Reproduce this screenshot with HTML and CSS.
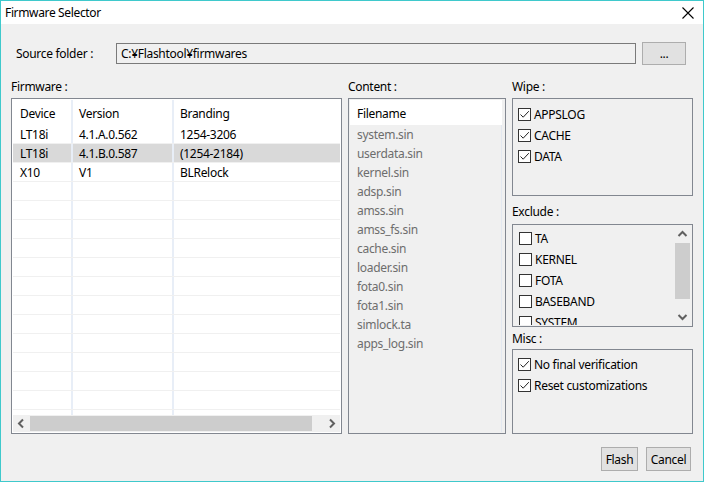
FILE: index.html
```html
<!DOCTYPE html>
<html>
<head>
<meta charset="utf-8">
<link rel="stylesheet" href="styles.css">
</head>
<body>
<div class="window">
  <div class="titlebar">
    <span class="title">Firmware Selector</span>
    <svg class="close" width="12" height="12" viewBox="0 0 12 12"><path d="M0.5 0.5 L11.5 11.5 M11.5 0.5 L0.5 11.5" stroke="#000" stroke-width="1.1" fill="none"/></svg>
  </div>
  <div class="body">
    <div class="source-row">
      <span class="source-label">Source folder :</span>
      <div class="textfield">C:¥Flashtool¥firmwares</div>
      <div class="btn btn-browse">...</div>
    </div>
    <div class="columns">
      <div class="col col-fw">
        <div class="grp-label">Firmware :</div>
        <div class="box fw-box">
          <div class="table">
            <div class="trow thead"><div class="c c1">Device</div><div class="c c2">Version</div><div class="c c3">Branding</div></div>
            <div class="trow"><div class="c c1">LT18i</div><div class="c c2">4.1.A.0.562</div><div class="c c3">1254-3206</div></div>
            <div class="trow sel"><div class="c c1">LT18i</div><div class="c c2">4.1.B.0.587</div><div class="c c3">(1254-2184)</div></div>
            <div class="trow"><div class="c c1">X10</div><div class="c c2">V1</div><div class="c c3">BLRelock</div></div>
            <div class="trow"><div class="c c1"></div><div class="c c2"></div><div class="c c3"></div></div>
            <div class="trow"><div class="c c1"></div><div class="c c2"></div><div class="c c3"></div></div>
            <div class="trow"><div class="c c1"></div><div class="c c2"></div><div class="c c3"></div></div>
            <div class="trow"><div class="c c1"></div><div class="c c2"></div><div class="c c3"></div></div>
            <div class="trow"><div class="c c1"></div><div class="c c2"></div><div class="c c3"></div></div>
            <div class="trow"><div class="c c1"></div><div class="c c2"></div><div class="c c3"></div></div>
            <div class="trow"><div class="c c1"></div><div class="c c2"></div><div class="c c3"></div></div>
            <div class="trow"><div class="c c1"></div><div class="c c2"></div><div class="c c3"></div></div>
            <div class="trow"><div class="c c1"></div><div class="c c2"></div><div class="c c3"></div></div>
            <div class="trow"><div class="c c1"></div><div class="c c2"></div><div class="c c3"></div></div>
            <div class="trow"><div class="c c1"></div><div class="c c2"></div><div class="c c3"></div></div>
            <div class="trow"><div class="c c1"></div><div class="c c2"></div><div class="c c3"></div></div>
            <div class="trow"><div class="c c1"></div><div class="c c2"></div><div class="c c3"></div></div>
          </div>
          <div class="hscroll">
            <svg class="arr" width="17" height="17" viewBox="0 0 17 17"><path d="M10 4.5 L6 8.5 L10 12.5" stroke="#606060" stroke-width="2" fill="none"/></svg>
            <div class="htrack"><div class="hthumb"></div></div>
            <svg class="arr" width="17" height="17" viewBox="0 0 17 17"><path d="M7 4.5 L11 8.5 L7 12.5" stroke="#606060" stroke-width="2" fill="none"/></svg>
          </div>
        </div>
      </div>
      <div class="col col-content">
        <div class="grp-label">Content :</div>
        <div class="box content-box">
          <div class="content-head">Filename</div>
          <div class="files">
            <div class="file">system.sin</div>
            <div class="file">userdata.sin</div>
            <div class="file">kernel.sin</div>
            <div class="file">adsp.sin</div>
            <div class="file">amss.sin</div>
            <div class="file">amss_fs.sin</div>
            <div class="file">cache.sin</div>
            <div class="file">loader.sin</div>
            <div class="file">fota0.sin</div>
            <div class="file">fota1.sin</div>
            <div class="file">simlock.ta</div>
            <div class="file">apps_log.sin</div>
          </div>
        </div>
      </div>
      <div class="col col-opts">
        <div class="grp-label">Wipe :</div>
        <div class="box opt-box wipe-box">
          <div class="chk"><span class="cb on"><svg width="11" height="11" viewBox="0 0 11 11"><path d="M1.5 5.5 L4.2 8.2 L9.8 2.2" stroke="#222" stroke-width="1" fill="none"/></svg></span>APPSLOG</div>
          <div class="chk"><span class="cb on"><svg width="11" height="11" viewBox="0 0 11 11"><path d="M1.5 5.5 L4.2 8.2 L9.8 2.2" stroke="#222" stroke-width="1" fill="none"/></svg></span>CACHE</div>
          <div class="chk"><span class="cb on"><svg width="11" height="11" viewBox="0 0 11 11"><path d="M1.5 5.5 L4.2 8.2 L9.8 2.2" stroke="#222" stroke-width="1" fill="none"/></svg></span>DATA</div>
        </div>
        <div class="grp-label grp-gap">Exclude :</div>
        <div class="box exclude-box">
          <div class="ex-list">
            <div class="chk"><span class="cb"></span>TA</div>
            <div class="chk"><span class="cb"></span>KERNEL</div>
            <div class="chk"><span class="cb"></span>FOTA</div>
            <div class="chk"><span class="cb"></span>BASEBAND</div>
            <div class="chk"><span class="cb"></span>SYSTEM</div>
          </div>
          <div class="vscroll">
            <svg class="varr" width="15" height="17" viewBox="0 0 15 17"><path d="M3.5 10 L7.5 6 L11.5 10" stroke="#606060" stroke-width="2" fill="none"/></svg>
            <div class="vtrack"><div class="vthumb"></div></div>
            <svg class="varr" width="15" height="17" viewBox="0 0 15 17"><path d="M3.5 7 L7.5 11 L11.5 7" stroke="#606060" stroke-width="2" fill="none"/></svg>
          </div>
        </div>
        <div class="grp-label grp-gap2">Misc :</div>
        <div class="box opt-box misc-box">
          <div class="chk"><span class="cb on"><svg width="11" height="11" viewBox="0 0 11 11"><path d="M1.5 5.5 L4.2 8.2 L9.8 2.2" stroke="#222" stroke-width="1" fill="none"/></svg></span>No final verification</div>
          <div class="chk"><span class="cb on"><svg width="11" height="11" viewBox="0 0 11 11"><path d="M1.5 5.5 L4.2 8.2 L9.8 2.2" stroke="#222" stroke-width="1" fill="none"/></svg></span>Reset customizations</div>
        </div>
      </div>
    </div>
    <div class="actions">
      <div class="btn btn-flash">Flash</div>
      <div class="btn btn-cancel">Cancel</div>
    </div>
  </div>
</div>
</body>
</html>
```

FILE: styles.css
```css
* { box-sizing: border-box; }
html, body { margin: 0; padding: 0; }
body {
  width: 704px;
  height: 482px;
  overflow: hidden;
  font-family: "Noto Sans", "Open Sans", sans-serif;
  font-size: 12px;
  color: #000;
  background: #f0f0f0;
}
.window {
  width: 704px;
  height: 482px;
  border: 1px solid #3fc9cc;
  background: #f0f0f0;
  display: flex;
  flex-direction: column;
}
.titlebar {
  height: 23px;
  background: #fff;
  display: flex;
  align-items: center;
  justify-content: space-between;
  padding: 0 9px 0 4px;
  flex: none;
}
.title { font-size: 12px; letter-spacing: -0.35px; }
.close { margin-top: 1px; }
.body {
  flex: 1;
  display: flex;
  flex-direction: column;
  padding: 17px 0 0 9px;
}
.source-row {
  display: flex;
  align-items: center;
  height: 24px;
  flex: none;
}
.source-label {
  width: 106px;
  padding-left: 6px;
  letter-spacing: -0.3px;
}
.textfield {
  width: 520px;
  height: 21px;
  border: 1px solid #7a7a7a;
  background: #f0f0f0;
  padding: 2px 0 0 4px;
  line-height: 15px;
  letter-spacing: -0.3px;
}
.btn {
  background: #e1e1e1;
  border: 1px solid #adadad;
  display: flex;
  align-items: center;
  justify-content: center;
  letter-spacing: -0.3px;
}
.btn-browse {
  margin-left: 6px;
  width: 44px;
  height: 23px;
}
.columns {
  display: flex;
  gap: 6px;
  margin-top: 15px;
  height: 355px;
  flex: none;
}
.col { display: flex; flex-direction: column; }
.grp-label {
  height: 18px;
  line-height: 14px;
  letter-spacing: -0.3px;
  padding-left: 0;
  flex: none;
}
.box {
  border: 1px solid #828790;
  flex: none;
}
.col-fw { width: 331px; margin-left: 1px; }
.fw-box {
  height: 336px;
  background: #fff;
  padding: 1px;
  display: flex;
  flex-direction: column;
}
.table { flex: 1; overflow: hidden; }
.trow {
  display: flex;
  height: 19px;
  border-bottom: 1px solid #f0f0f0;
}
.trow.thead { height: 25px; border-bottom: none; }
.trow.sel { background: #d9d9d9; }
.c {
  height: 100%;
  padding-left: 7px;
  display: flex;
  align-items: center;
  letter-spacing: -0.3px;
}
.c1 { width: 60px; border-right: 2px solid #e8eef7; }
.c2 { width: 101px; border-right: 2px solid #e8eef7; padding-left: 6px; }
.c3 { flex: 1; padding-left: 6px; }
.thead .c { padding-top: 1px; }
.hscroll {
  height: 17px;
  background: #f0f0f0;
  display: flex;
  align-items: center;
  flex: none;
}
.htrack { flex: 1; height: 15px; }
.hthumb { width: 282px; height: 15px; background: #cdcdcd; }
.col-content { width: 158px; }
.content-box {
  height: 336px;
  background: #f0f0f0;
  padding: 1px;
  display: flex;
  flex-direction: column;
}
.content-head {
  height: 25px;
  background: #fff;
  padding: 1px 0 0 7px;
  display: flex;
  align-items: center;
  letter-spacing: -0.3px;
  margin-right: 2px;
  flex: none;
}
.files {
  flex: 1;
  margin-right: 2px;
  border-right: 1px solid #e3e8f0;
}
.file {
  height: 19px;
  line-height: 19px;
  padding-left: 7px;
  color: #6d6d6d;
  letter-spacing: -0.3px;
}
.col-opts { width: 181px; }
.opt-box { padding: 5px 0 0 5px; }
.wipe-box { height: 98px; }
.chk {
  display: flex;
  align-items: center;
  height: 21px;
  letter-spacing: -0.3px;
}
.cb {
  width: 13px;
  height: 13px;
  border: 1px solid #333;
  background: #fff;
  margin-right: 3px;
  flex: none;
  display: flex;
  align-items: center;
  justify-content: center;
}
.grp-gap { margin-top: 9px; height: 19px; }
.exclude-box {
  height: 103px;
  display: flex;
  overflow: hidden;
  padding: 1px;
}
.ex-list { flex: 1; padding: 2px 0 0 5px; overflow: hidden; }
.vscroll {
  width: 15px;
  display: flex;
  flex-direction: column;
  background: #f0f0f0;
  margin-right: 1px;
}
.varr { flex: none; }
.vtrack { flex: 1; }
.vthumb { height: 56px; background: #cdcdcd; }
.grp-gap2 { margin-top: 5px; height: 17px; }
.misc-box { height: 85px; padding-top: 4px; }
.actions {
  display: flex;
  justify-content: flex-end;
  gap: 8px;
  padding: 0 12px 0 0;
  margin-top: 12px;
  flex: none;
}
.btn-flash { width: 37px; height: 24px; }
.btn-cancel { width: 45px; height: 24px; }
```
